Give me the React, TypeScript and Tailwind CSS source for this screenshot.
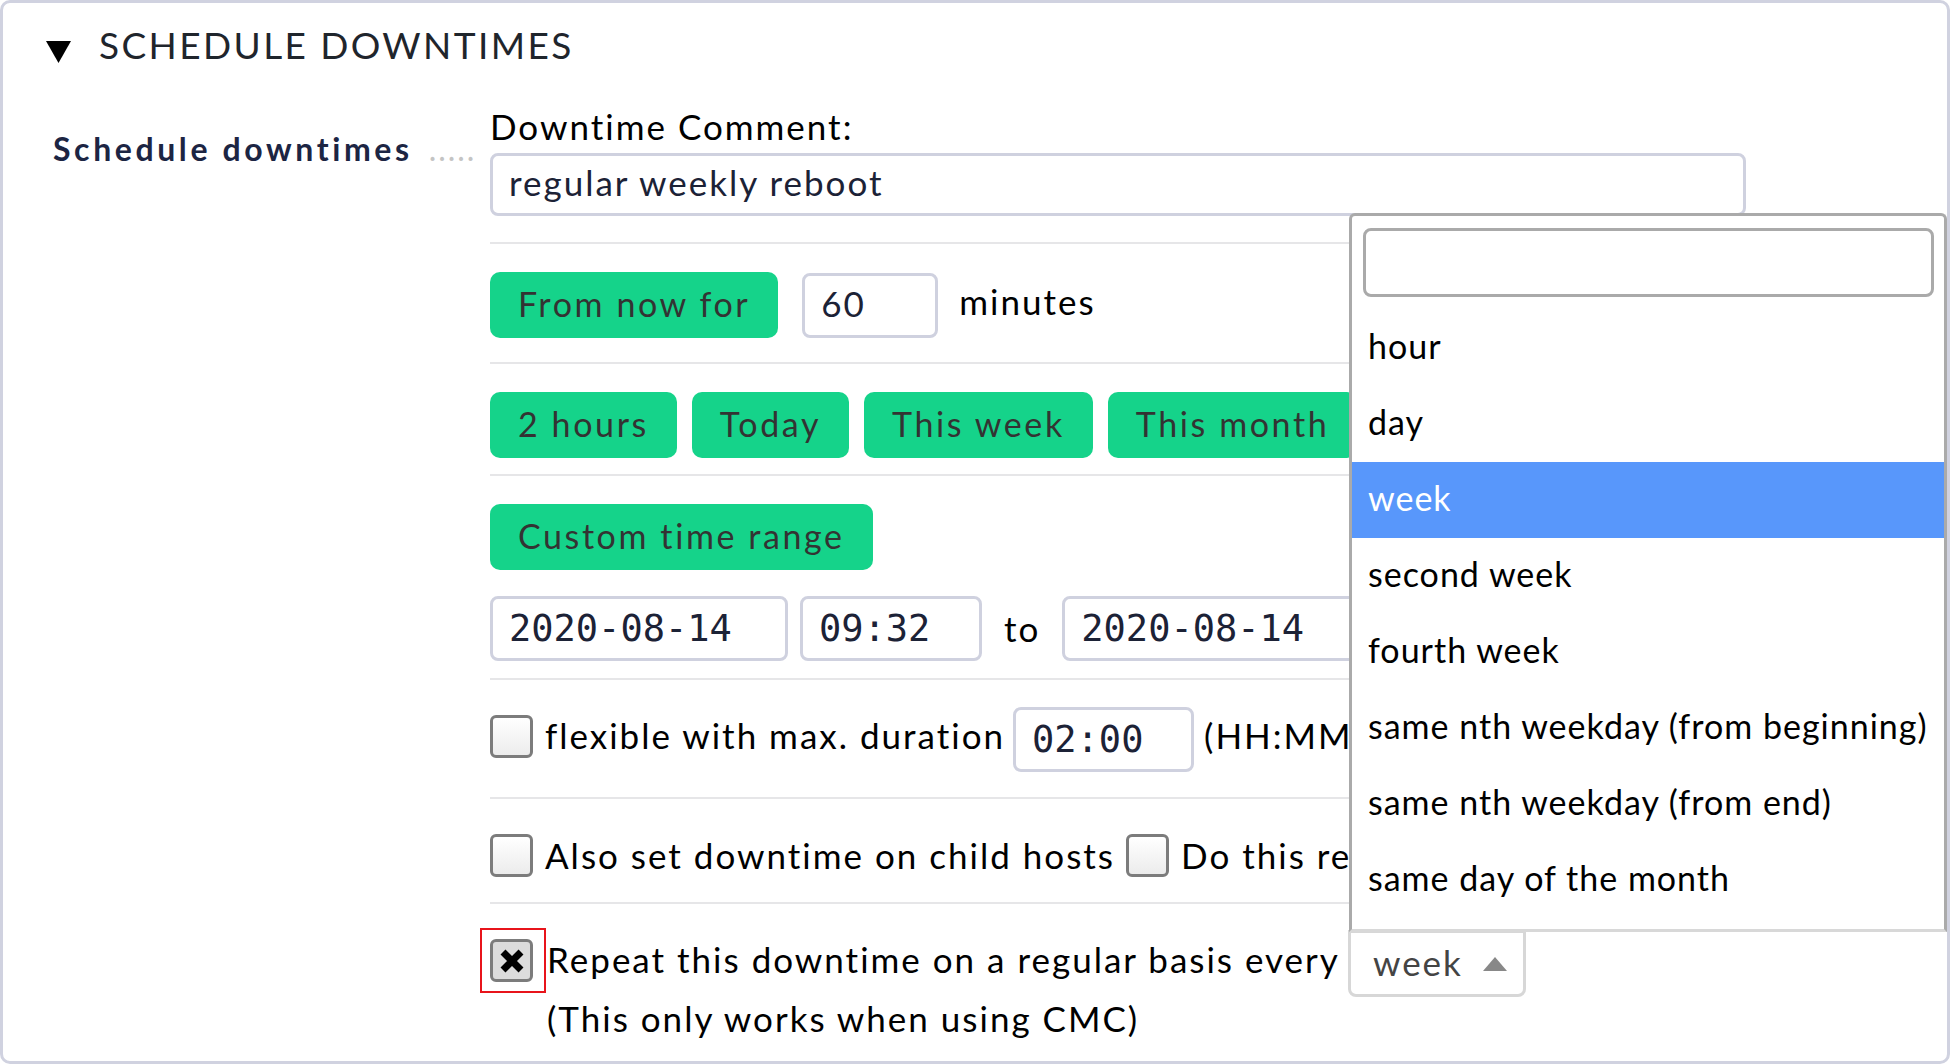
import React from "react";
import clsx from "clsx";
import { twMerge } from "tailwind-merge";

function Btn({ children }: { children: React.ReactNode }) {
  return (
    <div className="flex h-[66px] shrink-0 items-center rounded-[10px] bg-[#15d38a] px-[28px] pb-[3px] text-[34px] tracking-[2.6px] whitespace-nowrap text-[#333]">
      {children}
    </div>
  );
}

function Field({ className, mono, children }: { className: string; mono?: boolean; children: React.ReactNode }) {
  return (
    <div
      className={twMerge(
        clsx(
          "flex h-[65px] shrink-0 items-center rounded-[8px] border-[3px] border-[#cfd1df] bg-white pl-[16px] whitespace-nowrap text-[#1c2236]",
          mono ? "font-['DejaVu_Sans_Mono',monospace] text-[37px] tracking-normal" : "pb-[4px] text-[35px]"
        ),
        className
      )}
    >
      {children}
    </div>
  );
}

function Check({ checked }: { checked?: boolean }) {
  return (
    <div
      className={clsx(
        "flex h-[43px] w-[43px] shrink-0 items-center justify-center rounded-[6px] border-[3px] border-[#7c7c7c]",
        checked ? "bg-[#dcdcdc]" : "bg-linear-to-b from-white to-[#ececec]"
      )}
    >
      {checked && (
        <svg width="26" height="26" viewBox="0 0 26 26">
          <path d="M4 4 L22 22 M22 4 L4 22" stroke="#000" strokeWidth="7" strokeLinecap="butt" />
        </svg>
      )}
    </div>
  );
}

const periods = [
  "hour",
  "day",
  "week",
  "second week",
  "fourth week",
  "same nth weekday (from beginning)",
  "same nth weekday (from end)",
  "same day of the month",
];

export default function App() {
  return (
    <div className="relative h-[1064px] w-[1950px] overflow-hidden rounded-[10px] border-[3px] border-[#d0d2e0] bg-white font-['Lato',sans-serif] text-black">
      {/* header */}
      <div className="flex h-[85px] items-center pl-[43px]">
        <svg className="mt-[13px] h-[22px] w-[25px]" viewBox="0 0 25 22">
          <polygon points="0,0 25,0 12.5,22" fill="#000" />
        </svg>
        <span className="mb-[2px] ml-[28px] text-[37px] tracking-[2.4px] text-[#1f252c]">SCHEDULE DOWNTIMES</span>
      </div>

      <div className="flex">
        <div className="w-[487px] shrink-0 pt-[38px] pl-[50px]">
          <div className="flex h-[46px] items-center">
            <span className="text-[32px] font-bold tracking-[3.6px] text-[#1c2543]">Schedule downtimes</span>
            <span className="ml-[16px] text-[32px] tracking-[2px] text-[#c4c4c4]">.....</span>
          </div>
        </div>

        <div className="w-[1256px] shrink-0 pt-[13px] text-[35px] tracking-[2px]">
          <div className="pb-[26px]">
            <div className="flex h-[51px] items-center">Downtime Comment:</div>
            <Field className="mt-[1px] h-[63px] w-full">regular weekly reboot</Field>
          </div>

          <div className="flex items-center gap-[24px] border-t-2 border-[#e6e6e8] pt-[28px] pb-[24px]">
            <Btn>From now for</Btn>
            <div className="flex items-center gap-[21px]">
              <Field className="w-[136px]">60</Field>
              <span className="mb-[8px]">minutes</span>
            </div>
          </div>

          <div className="flex gap-[15px] border-t-2 border-[#e6e6e8] pt-[28px] pb-[16px]">
            <Btn>2 hours</Btn>
            <Btn>Today</Btn>
            <Btn>This week</Btn>
            <Btn>This month</Btn>
          </div>

          <div className="border-t-2 border-[#e6e6e8] pt-[28px] pb-[17px]">
            <div className="flex">
              <Btn>Custom time range</Btn>
            </div>
            <div className="mt-[26px] flex items-center">
              <Field mono className="w-[298px]">2020-08-14</Field>
              <Field mono className="ml-[12px] w-[182px]">09:32</Field>
              <span className="ml-[22px]">to</span>
              <Field mono className="ml-[22px] w-[298px]">2020-08-14</Field>
            </div>
          </div>

          <div className="flex items-center border-t-2 border-[#e6e6e8] pt-[27px] pb-[25px] whitespace-nowrap">
            <div className="mb-[6px]">
              <Check />
            </div>
            <span className="mb-[8px] ml-[12px]">flexible with max. duration</span>
            <Field mono className="ml-[8px] w-[181px]">02:00</Field>
            <span className="mb-[8px] ml-[10px]">(HH:MM)</span>
          </div>

          <div className="flex h-[105px] items-center border-t-2 border-[#e6e6e8] pt-[10px] whitespace-nowrap">
            <Check />
            <span className="ml-[12px]">Also set downtime on child hosts</span>
            <span className="ml-[11px]">
              <Check />
            </span>
            <span className="ml-[12px]">Do this recursively</span>
          </div>

          <div className="flex items-start border-t-2 border-[#e6e6e8] whitespace-nowrap">
            <div className="relative mt-[35px]">
              <Check checked />
              <div className="absolute -top-[11px] -right-[13px] -bottom-[11px] -left-[10px] border-2 border-[#e8141b]" />
            </div>
            <div className="mt-[26px] ml-[14px]">
              <div className="flex h-[67px] items-center">
                <span className="mb-[9px]">Repeat this downtime on a regular basis every</span>
                <div className="ml-[8px] flex h-[67px] w-[178px] items-center rounded-b-[8px] border-[3px] border-[#d7d7d7] pb-[2px] pl-[22px] text-[#444]">
                  <span>week</span>
                  <svg className="mt-[2px] ml-[20px]" width="24" height="14" viewBox="0 0 24 14">
                    <polygon points="0,14 24,14 12,0" fill="#888" />
                  </svg>
                </div>
              </div>
              <div className="mt-px flex h-[40px] items-center">(This only works when using CMC)</div>
            </div>
          </div>
        </div>
      </div>

      {/* open select2 dropdown */}
      <div className="absolute top-[210px] left-[1346px] z-10 h-[719px] w-[598px] rounded-t-[6px] border-[3px] border-[#aaaaaa] border-b-[#d8d8d8] bg-white">
        <div className="mx-[10px] mt-[12px] ml-[11px] h-[69px] rounded-[8px] border-[3px] border-[#aaaaaa]" />
        <div className="mt-[13px] text-[34px] tracking-[1px]">
          {periods.map((p) => (
            <div
              key={p}
              className={clsx(
                "flex h-[76px] items-center pb-[5px] pl-[16px] whitespace-nowrap",
                p === "week" ? "bg-[#5897fb] text-white" : "text-black"
              )}
            >
              {p}
            </div>
          ))}
        </div>
      </div>
    </div>
  );
}
